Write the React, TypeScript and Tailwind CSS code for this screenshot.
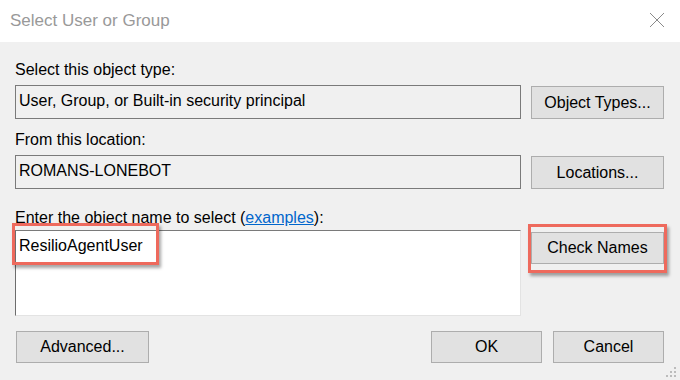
import React from 'react'

const font = { fontFamily: '"Liberation Sans", Arial, sans-serif' }

function DialogButton({ label, size = 'h-[33px] w-[133px]', className = '' }: { label: string; size?: string; className?: string }) {
  return (
    <button
      type="button"
      className={`flex items-center justify-center border border-[#adadad] bg-[#e1e1e1] text-[16px] text-black ${size} ${className}`}
    >
      {label}
    </button>
  )
}

function Highlight({ className }: { className: string }) {
  return (
    <div
      className={`pointer-events-none absolute border-[3px] border-[#ee6a5d] shadow-[2px_3px_3px_rgba(0,0,0,0.35)] ${className}`}
    />
  )
}

function ResizeGrip() {
  const dots = [
    [8, 0],
    [4, 4],
    [8, 4],
    [0, 8],
    [4, 8],
    [8, 8],
  ]
  return (
    <svg width="11" height="11" viewBox="0 0 11 11" className="absolute bottom-[2px] right-[3px]">
      {dots.map(([x, y]) => (
        <rect key={`${x}-${y}`} x={x} y={y} width="2" height="2" fill="#bcbcbc" />
      ))}
    </svg>
  )
}

export default function App() {
  return (
    <div className="flex h-[380px] w-[680px] flex-col overflow-hidden bg-[#f0f0f0]" style={font}>
      {/* title bar */}
      <div className="flex h-[42px] shrink-0 items-center justify-between bg-white pl-[10px] pr-[15px]">
        <span className="text-[17px] text-[#999999]">Select User or Group</span>
        <svg width="16" height="16" viewBox="0 0 16 16" className="mt-[-2px]">
          <path d="M1 1 L15 15 M15 1 L1 15" stroke="#8a8a8a" strokeWidth="1" />
        </svg>
      </div>

      <div className="relative flex-1 px-[15px] pt-[18px]">
        <div className="h-[20px] text-[16px] leading-[20px] text-black">Select this object type:</div>
        <div className="mt-[5px] flex items-start gap-[10px]">
          <div className="h-[34px] w-[506px] border border-[#7a7a7a] px-[3px] pt-[5px] text-[16px] leading-[20px] text-black">
            User, Group, or Built-in security principal
          </div>
          <DialogButton label="Object Types..." className="mt-[1px]" />
        </div>

        <div className="mt-[11px] h-[20px] text-[16px] leading-[20px] text-black">From this location:</div>
        <div className="mt-[5px] flex items-start gap-[10px]">
          <div className="h-[34px] w-[506px] border border-[#7a7a7a] px-[3px] pt-[5px] text-[16px] leading-[20px] text-black">
            ROMANS-LONEBOT
          </div>
          <DialogButton label="Locations..." className="mt-[1px]" />
        </div>

        <div className="mt-[19px] h-[20px] text-[16px] leading-[20px] text-black">
          <span className="underline">E</span>nter the object name to select (
          <span className="text-[#0066cc] underline">examples</span>):
        </div>
        <div className="mt-[2px] flex items-start gap-[10px]">
          <div className="relative h-[86px] w-[506px] border-b border-l border-r border-t border-b-[#e3e3e3] border-l-[#6d6d6d] border-r-[#e3e3e3] border-t-[#7a7a7a] bg-white px-[3px] pt-[5px] text-[16px] leading-[20px] text-black">
            ResilioAgentUser
            <Highlight className="left-[-4px] top-[-8px] h-[42px] w-[147px]" />
          </div>
          <div className="relative mt-[2px]">
            <DialogButton label="Check Names" size="h-[32px] w-[133px]" />
            <Highlight className="left-[-3px] top-[-8px] h-[49px] w-[139px]" />
          </div>
        </div>

        <div className="mt-[15px] flex items-start">
          <DialogButton label="Advanced..." size="h-[32px] w-[133px]" className="ml-[1px]" />
          <div className="ml-auto flex gap-[11px]">
            <DialogButton label="OK" size="h-[32px] w-[111px]" />
            <DialogButton label="Cancel" size="h-[32px] w-[111px]" className="mr-[1px]" />
          </div>
        </div>

        <ResizeGrip />
      </div>
    </div>
  )
}
